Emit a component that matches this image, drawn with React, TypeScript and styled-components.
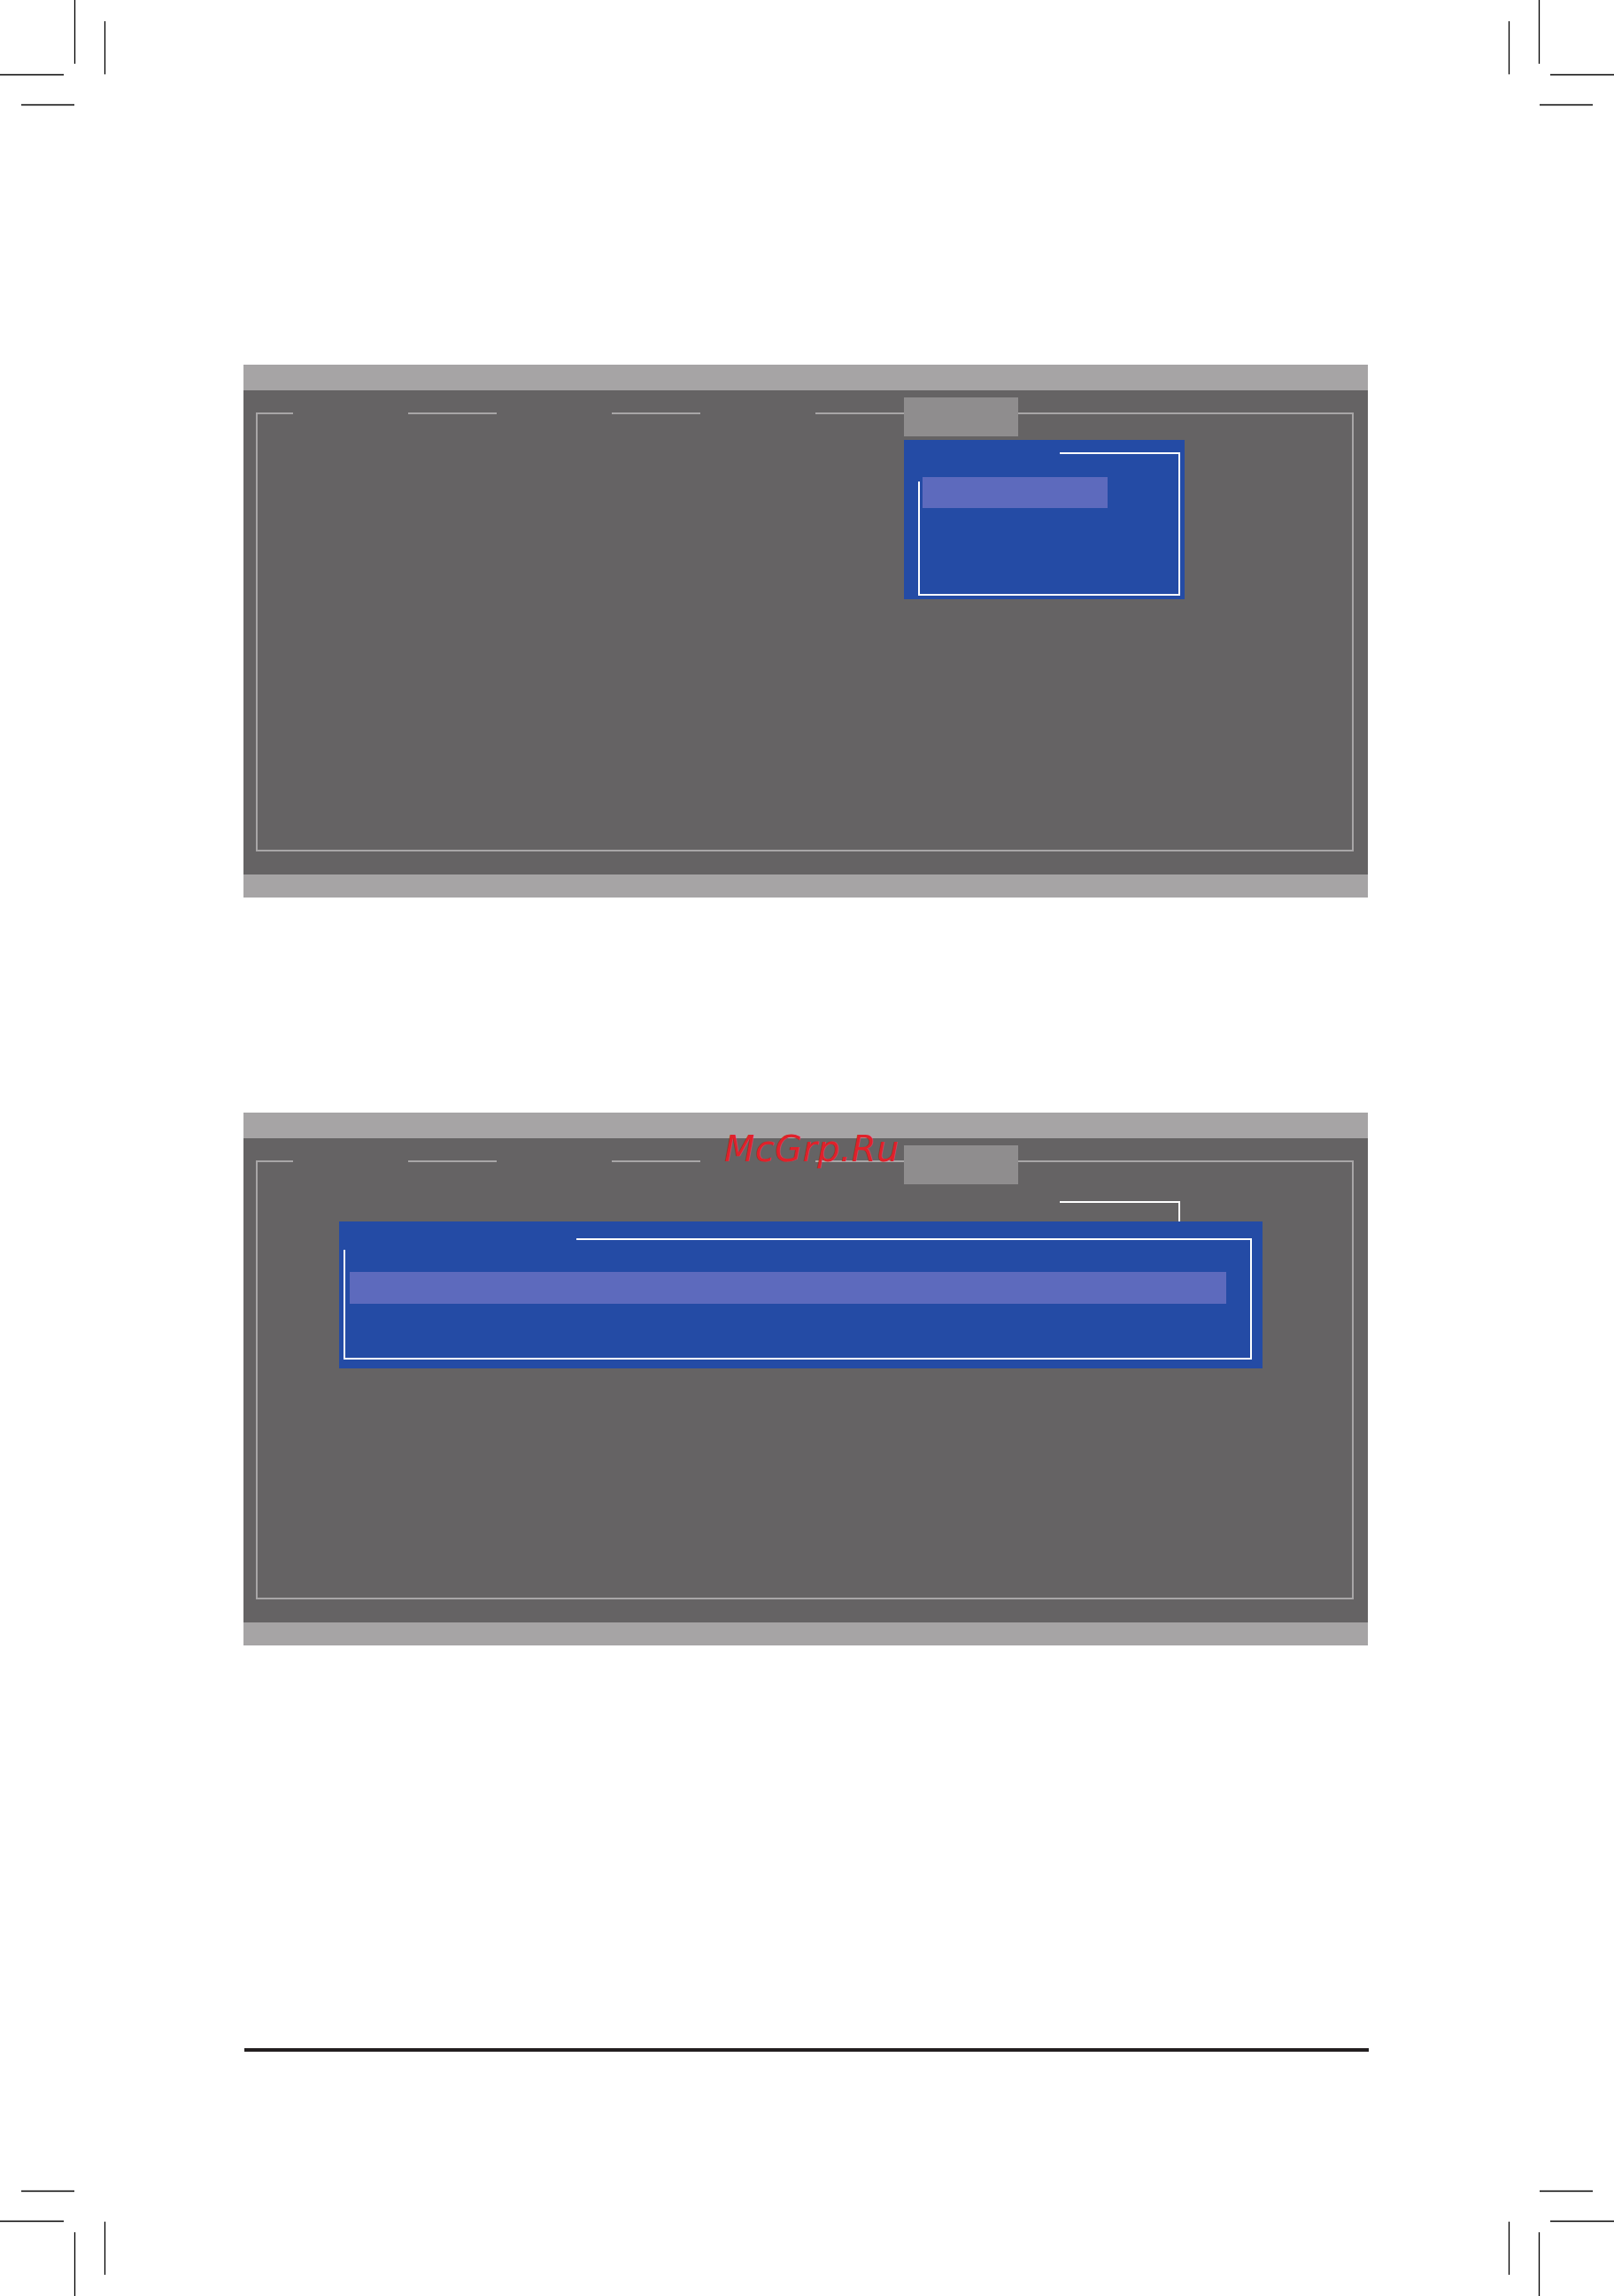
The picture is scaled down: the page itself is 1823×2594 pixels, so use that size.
import React from "react";
import styled, { createGlobalStyle } from "styled-components";

const GlobalStyle = createGlobalStyle`
  html, body { margin: 0; padding: 0; background: #ffffff; }
  body { font-family: "DejaVu Sans", "Liberation Sans", sans-serif; }
`;

const Page = styled.div`
  position: relative;
  width: 1823px;
  height: 2594px;
  background: #ffffff;
  overflow: hidden;
`;

const Content = styled.main`
  display: flex;
  flex-direction: column;
  align-items: flex-start;
  padding: 412px 0 0 275px;
`;

const Panel = styled.section`
  width: 1270px;
  display: flex;
  flex-direction: column;
  background: #656364;
  & + & {
    margin-top: 243px;
  }
`;

const Bar = styled.div<{ $h: number }>`
  height: ${(p) => p.$h}px;
  background: #a6a4a5;
  flex-shrink: 0;
`;

const PanelBody = styled.div`
  height: 547px;
  box-sizing: border-box;
  padding: 25px 16px 26px 14px;
  display: flex;
`;

const FrameWrap = styled.div`
  position: relative;
  flex: 1;
  display: flex;
  flex-direction: column;
`;

const TopRow = styled.div`
  display: flex;
  align-items: flex-start;
  height: 2px;
  flex-shrink: 0;
`;

const Seg = styled.div<{ $w?: number; $ml?: number }>`
  height: 2px;
  background: #a8a6a7;
  margin-left: ${(p) => p.$ml ?? 0}px;
  ${(p) => (p.$w ? `flex: 0 0 ${p.$w}px;` : "flex: 1;")}
`;

const Tab = styled.div`
  flex: 0 0 129px;
  height: 44px;
  margin-top: -17px;
  background: #8f8d8e;
  position: relative;
  z-index: 1;
`;

const FrameBox = styled.div`
  flex: 1;
  border: 2px solid #a8a6a7;
  border-top: none;
`;

const Popup = styled.div<{ $left: number; $top: number; $w: number; $h: number; $pad: string }>`
  position: absolute;
  left: ${(p) => p.$left}px;
  top: ${(p) => p.$top}px;
  width: ${(p) => p.$w}px;
  height: ${(p) => p.$h}px;
  box-sizing: border-box;
  padding: ${(p) => p.$pad};
  background: #244ba5;
  display: flex;
  z-index: 3;
`;

const InnerFrame = styled.div`
  flex: 1;
  display: flex;
  flex-direction: column;
  border-right: 2px solid #ffffff;
  border-bottom: 2px solid #ffffff;
`;

const TitleLine = styled.div<{ $start: number }>`
  height: 2px;
  flex-shrink: 0;
  margin-left: ${(p) => p.$start}px;
  background: #ffffff;
`;

const InnerBody = styled.div`
  flex: 1;
  display: flex;
  align-items: flex-start;
`;

const LeftLine = styled.div<{ $top: number }>`
  width: 2px;
  flex-shrink: 0;
  align-self: stretch;
  margin-top: ${(p) => p.$top}px;
  background: #ffffff;
`;

const Highlight = styled.div<{ $ml: number; $mt: number; $w: number; $h: number }>`
  margin-left: ${(p) => p.$ml}px;
  margin-top: ${(p) => p.$mt}px;
  width: ${(p) => p.$w}px;
  height: ${(p) => p.$h}px;
  background: #5d6abd;
`;

const GhostBracket = styled.div`
  position: absolute;
  left: 908px;
  top: 46px;
  width: 136px;
  height: 30px;
  box-sizing: border-box;
  border-top: 2px solid #ffffff;
  border-right: 2px solid #ffffff;
  z-index: 2;
`;

const Rule = styled.hr`
  margin: 455px 0 0 1px;
  border: none;
  width: 1270px;
  height: 4px;
  background: #231f20;
`;

const Watermark = styled.div`
  position: absolute;
  left: 818px;
  top: 1275px;
  font-family: "DejaVu Sans", sans-serif;
  font-style: italic;
  font-size: 40px;
  letter-spacing: 0.3px;
  color: #e0212a;
  line-height: normal;
  z-index: 5;
`;

type CornerPos = "tl" | "tr" | "bl" | "br";

const CornerSvg = styled.svg<{ $pos: CornerPos }>`
  position: absolute;
  width: 120px;
  height: 120px;
  ${(p) => (p.$pos[0] === "t" ? "top: 0;" : "bottom: 0;")}
  ${(p) => (p.$pos[1] === "l" ? "left: 0;" : "right: 0;")}
  transform: scale(${(p) => (p.$pos[1] === "l" ? 1 : -1)}, ${(p) => (p.$pos[0] === "t" ? 1 : -1)});
`;

const CropMark: React.FC<{ pos: CornerPos }> = ({ pos }) => (
  <CornerSvg $pos={pos} viewBox="0 0 120 120">
    <path
      d="M84.5 0 V72 M0 84.5 H72 M118.5 24 V84 M24 118.5 H84"
      stroke="#000"
      strokeWidth={1.3}
      fill="none"
    />
  </CornerSvg>
);

const MenuTop: React.FC = () => (
  <TopRow>
    <Seg $w={42} />
    <Seg $w={100} $ml={130} />
    <Seg $w={100} $ml={130} />
    <Seg $w={100} $ml={130} />
    <Tab />
    <Seg />
  </TopRow>
);

const BiosPanel: React.FC<{ children?: React.ReactNode }> = ({ children }) => (
  <Panel>
    <Bar $h={29} />
    <PanelBody>
      <FrameWrap>
        <MenuTop />
        <FrameBox />
        {children}
      </FrameWrap>
    </PanelBody>
    <Bar $h={26} />
  </Panel>
);

export default function App() {
  return (
    <Page>
      <GlobalStyle />
      <CropMark pos="tl" />
      <CropMark pos="tr" />
      <CropMark pos="bl" />
      <CropMark pos="br" />
      <Content>
        <BiosPanel>
          <Popup $left={732} $top={31} $w={317} $h={180} $pad="14px 5px 4px 16px">
            <InnerFrame>
              <TitleLine $start={160} />
              <InnerBody>
                <LeftLine $top={31} />
                <Highlight $ml={3} $mt={26} $w={209} $h={35} />
              </InnerBody>
            </InnerFrame>
          </Popup>
        </BiosPanel>
        <BiosPanel>
          <GhostBracket />
          <Popup $left={94} $top={69} $w={1043} $h={166} $pad="19px 12px 10px 5px">
            <InnerFrame>
              <TitleLine $start={263} />
              <InnerBody>
                <LeftLine $top={11} />
                <Highlight $ml={5} $mt={36} $w={990} $h={36} />
              </InnerBody>
            </InnerFrame>
          </Popup>
        </BiosPanel>
        <Rule />
      </Content>
      <Watermark>McGrp.Ru</Watermark>
    </Page>
  );
}
